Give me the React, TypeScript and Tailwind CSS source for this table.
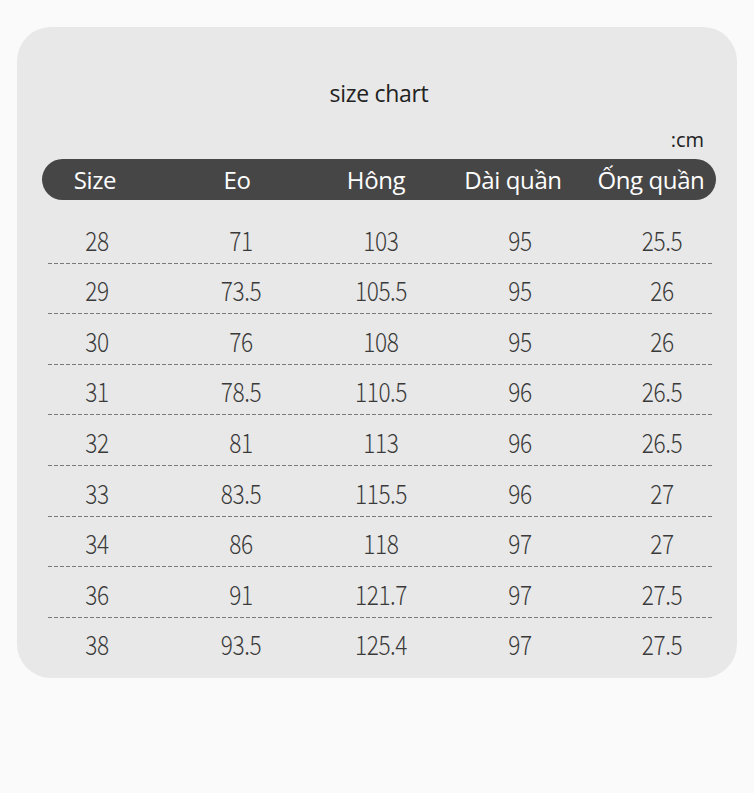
const headers = ["Size", "Eo", "Hông", "Dài quần", "Ống quần"];

const rows = [
  ["28", "71", "103", "95", "25.5"],
  ["29", "73.5", "105.5", "95", "26"],
  ["30", "76", "108", "95", "26"],
  ["31", "78.5", "110.5", "96", "26.5"],
  ["32", "81", "113", "96", "26.5"],
  ["33", "83.5", "115.5", "96", "27"],
  ["34", "86", "118", "97", "27"],
  ["36", "91", "121.7", "97", "27.5"],
  ["38", "93.5", "125.4", "97", "27.5"],
];

// left offset of each 100px data cell so the text lands on the column centre
const cellGap = ["ml-[-1px]", "ml-[44px]", "ml-[40px]", "ml-[39px]", "ml-[42px]"];
const headGap = ["ml-[-7px]", "ml-[22px]", "ml-[19px]", "ml-[17px]", "ml-[18px]"];

export default function App() {
  return (
    <div className="min-h-[793px] w-[754px] bg-[#fafafa] pt-[27px] pl-[17px]">
      <div className="w-[720px] h-[651px] rounded-[34px] bg-[#e8e8e8] pt-[50px] font-['Open_Sans',sans-serif]">
        <div className="text-center text-[23px] leading-[32px] text-[#222] tracking-[-0.3px] pl-[4px]">
          size chart
        </div>
        <div className="flex justify-end pr-[33px] mt-[19px] text-[20px] leading-[24px] text-[#222]">
          :cm
        </div>
        <div className="ml-[25px] mt-[7px] w-[674px] h-[41px] rounded-[21px] bg-[#464646] flex items-center text-white text-[24px] tracking-[-0.4px]">
          {headers.map((h, i) => (
            <div key={h} className={`${headGap[i]} w-[120px] shrink-0 text-center whitespace-nowrap`}>
              {h}
            </div>
          ))}
        </div>
        <div className="mt-[13px] ml-[31px] w-[665px] font-['Noto_Sans_CJK_SC',sans-serif] font-extralight text-[27px] text-[#3a3a3a]">
          {rows.map((r, i) => (
            <div key={i}>
              <div className="h-[49.6px] flex items-center pt-[4px]">
                {r.map((c, j) => (
                  <div key={j} className={`${cellGap[j]} w-[100px] shrink-0 text-center`}>
                    <span className="inline-block scale-x-[0.84] tracking-[-0.5px]">{c}</span>
                  </div>
                ))}
              </div>
              {i < rows.length - 1 && (
                <div className="h-px bg-[repeating-linear-gradient(90deg,#7a7a7a_0_4px,transparent_4px_6px)]" />
              )}
            </div>
          ))}
        </div>
      </div>
    </div>
  );
}
